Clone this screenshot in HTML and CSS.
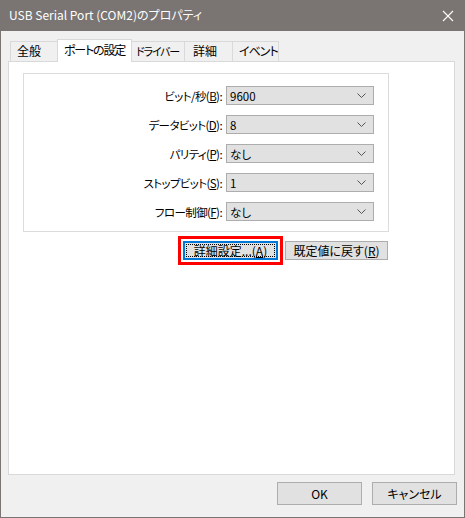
FILE: index.html
```html
<!DOCTYPE html>
<html lang="ja">
<head>
<meta charset="utf-8">
<title>USB Serial Port (COM2)のプロパティ</title>
<link rel="stylesheet" href="styles.css">
</head>
<body>
<div class="window">
  <div class="titlebar">
    <span class="title">USB Serial Port (COM2)のプロパティ</span>
    <svg class="close" width="12" height="12" viewBox="0 0 12 12"><path d="M1 1L11 11M11 1L1 11" stroke="#fff" stroke-width="1.1" fill="none"/></svg>
  </div>
  <div class="client">
    <div class="tabs">
      <div class="tab t1">全般</div>
      <div class="tab t2 active">ポートの設定</div>
      <div class="tab t3">ドライバー</div>
      <div class="tab t4">詳細</div>
      <div class="tab t5">イベント</div>
    </div>
    <div class="panel">
      <div class="group">
        <div class="row">
          <span class="label">ビット/秒(<u>B</u>):</span>
          <div class="combo"><span class="value">9600</span><svg class="chev" width="9" height="5" viewBox="0 0 9 5"><path d="M0.5 0.5L4.5 4.5L8.5 0.5" stroke="#555" fill="none"/></svg></div>
        </div>
        <div class="row">
          <span class="label">データビット(<u>D</u>):</span>
          <div class="combo"><span class="value">8</span><svg class="chev" width="9" height="5" viewBox="0 0 9 5"><path d="M0.5 0.5L4.5 4.5L8.5 0.5" stroke="#555" fill="none"/></svg></div>
        </div>
        <div class="row">
          <span class="label">パリティ(<u>P</u>):</span>
          <div class="combo"><span class="value">なし</span><svg class="chev" width="9" height="5" viewBox="0 0 9 5"><path d="M0.5 0.5L4.5 4.5L8.5 0.5" stroke="#555" fill="none"/></svg></div>
        </div>
        <div class="row">
          <span class="label">ストップビット(<u>S</u>):</span>
          <div class="combo"><span class="value">1</span><svg class="chev" width="9" height="5" viewBox="0 0 9 5"><path d="M0.5 0.5L4.5 4.5L8.5 0.5" stroke="#555" fill="none"/></svg></div>
        </div>
        <div class="row">
          <span class="label">フロー制御(<u>F</u>):</span>
          <div class="combo"><span class="value">なし</span><svg class="chev" width="9" height="5" viewBox="0 0 9 5"><path d="M0.5 0.5L4.5 4.5L8.5 0.5" stroke="#555" fill="none"/></svg></div>
        </div>
      </div>
      <div class="actions">
        <button class="btn btn-advanced"><span class="focus">詳細設定...(<u>A</u>)</span></button>
        <button class="btn btn-default">既定値に戻す(<u>R</u>)</button>
      </div>
    </div>
    <div class="footer">
      <button class="btn btn-footer">OK</button>
      <button class="btn btn-footer">キャンセル</button>
    </div>
  </div>
</div>
</body>
</html>
```

FILE: styles.css
```css
* { box-sizing: border-box; }
html, body { margin: 0; padding: 0; background: #f0f0f0; }
body {
  font-family: "Noto Sans CJK JP", "Noto Sans", sans-serif;
  font-size: 12px;
  font-feature-settings: "palt" 1;
  color: #000;
}
.window {
  width: 465px;
  height: 518px;
  border: 1px solid #7a7473;
  border-top: none;
  background: #f0f0f0;
  display: flex;
  flex-direction: column;
}
.titlebar {
  height: 31px;
  background: #7a7473;
  display: flex;
  align-items: center;
  justify-content: space-between;
  padding: 0 10px 0 8px;
  flex: none;
}
.title {
  color: #fff;
  font-size: 12px;
  line-height: 16px;
  margin-top: -1px;
}
.close { display: block; }
.client {
  flex: 1;
  display: flex;
  flex-direction: column;
  padding: 8px 9px 0 7px;
}
.tabs {
  display: flex;
  align-items: flex-end;
  height: 22px;
  padding-left: 2px;
}
.tab {
  height: 20px;
  border: 1px solid #d9d9d9;
  border-bottom: none;
  background: #f0f0f0;
  line-height: 18px;
  padding-left: 6px;
  white-space: nowrap;
  overflow: hidden;
  margin-left: -1px;
}
.tab.t1 { width: 48px; margin-left: 0; padding-left: 6px; }
.tab.t2 { width: 75px; padding-left: 6px; letter-spacing: -1.2px; }
.tab.t3 { width: 54px; padding-left: 4px; font-size: 11px; letter-spacing: -1.2px; }
.tab.t4 { width: 49px; padding-left: 8px; }
.tab.t5 { width: 47px; padding-left: 6px; letter-spacing: -1px; }
.tab.active {
  height: 23px;
  margin-bottom: -1px;
  background: #fff;
  position: relative;
  z-index: 1;
  line-height: 18px;
  padding-top: 1px;
}
.panel {
  height: 414px;
  border: 1px solid #d9d9d9;
  background: #fff;
  padding: 11px 0 0 14px;
  flex: none;
}
.group {
  width: 366px;
  height: 159px;
  border: 1px solid #dcdcdc;
  padding: 12px 14px 0 0;
  display: flex;
  flex-direction: column;
  gap: 10px;
}
.row {
  display: flex;
  justify-content: flex-end;
  align-items: center;
  gap: 4px;
  height: 19px;
}
.label {
  line-height: 16px;
  white-space: nowrap;
  font-size: 11.5px;
  letter-spacing: -0.6px;
}
.combo {
  width: 148px;
  height: 19px;
  background: #e1e1e1;
  border: 1px solid #adadad;
  display: flex;
  align-items: center;
  justify-content: space-between;
  padding: 0 7px 0 3px;
}
.value { line-height: 16px; font-size: 11.5px; }
.chev { display: block; }
.actions {
  width: 366px;
  display: flex;
  justify-content: flex-end;
  gap: 7px;
  margin-top: 9px;
  padding-right: 1px;
}
.btn {
  font: inherit;
  font-feature-settings: "palt" 1;
  color: #000;
  background: #e1e1e1;
  border: 1px solid #adadad;
  height: 19px;
  padding: 0;
  margin: 0;
  display: flex;
  align-items: center;
  justify-content: center;
  line-height: 14px;
  white-space: nowrap;
}
.btn-advanced {
  width: 95px;
  border: 2px solid #0078d7;
  padding: 1px;
  outline: 3px solid #ff0000;
  outline-offset: 2px;
}
.btn-advanced .focus {
  flex: 1;
  align-self: stretch;
  border: 1px dotted #000;
  display: flex;
  align-items: center;
  justify-content: center;
}
.btn-default { width: 103px; }
.footer {
  display: flex;
  justify-content: flex-end;
  gap: 10px;
  padding-top: 7px;
  margin-right: -2px;
}
.btn-footer {
  width: 85px;
  height: 23px;
}
```
